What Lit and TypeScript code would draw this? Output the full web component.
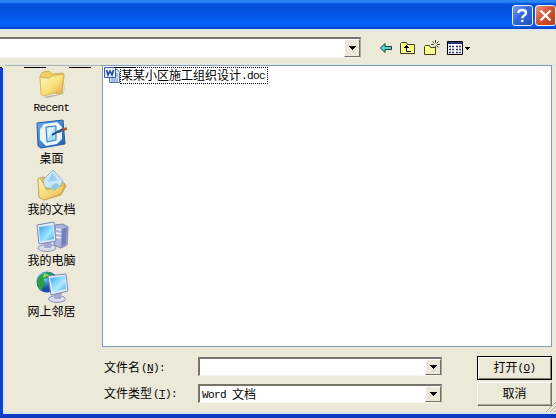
import { LitElement, html, css, svg } from "lit";
import { customElement } from "lit/decorators.js";

const folder = svg`<svg width="38" height="32" viewBox="0 0 38 32">
  <defs><linearGradient id="f" x2="1" y2="1"><stop stop-color="#fffbc0"/><stop offset=".55" stop-color="#f8df7c"/><stop offset="1" stop-color="#dda83c"/></linearGradient></defs>
  <path d="M10 30l17-3 4-3 2-13-3 16-16 4z" fill="#a89c78" opacity=".7"/>
  <path d="M7 9l3-4 6-1 3 3 11-1 1 3-2 17-4 1L8 20z" fill="#efcf62" stroke="#c8a548" stroke-width=".8"/>
  <path d="M7 10l4 1 5 0 3-2 12-2-2 17-19 5-2-2z" fill="url(#f)" stroke="#d2ab4c" stroke-width=".8"/></svg>`;

const desktop = svg`<svg width="38" height="32" viewBox="0 0 38 32">
  <defs><linearGradient id="d" x2="1" y2="1"><stop stop-color="#6eafeb"/><stop offset="1" stop-color="#1e5cae"/></linearGradient></defs>
  <path d="M4 5l26-3 2 24-24 4-3-2z" fill="url(#d)" stroke="#245da4"/>
  <path d="M11 6l13-2 5 5v12l-5 5-11 2-6-6V11z" fill="#e7f6fc"/>
  <path d="M13 9l10-1v14l-9 2z" fill="#a5d9f4" stroke="#3877b5"/>
  <path d="M14 10l8-1-7 12z" fill="#dcf4ff"/>
  <path d="M19 17l7-4" stroke="#163e83" stroke-width="1.500"/><path d="M25 14l6-3" stroke="#375687" stroke-width="2.600"/><path d="M30 11.500l4-1" stroke="#bd5037" stroke-width="2.600"/></svg>`;

const documents = svg`<svg width="38" height="32" viewBox="0 0 38 32">
  <defs><linearGradient id="m" x2="1" y2="1"><stop stop-color="#fff9b9"/><stop offset="1" stop-color="#e9b947"/></linearGradient></defs>
  <path d="M5 10l5-2 21 6 2 3-5 9-17 5-5-3z" fill="#eac85d" stroke="#bb9441" stroke-width=".8"/>
  <path d="M10 11L20 1l10 11-5 9-14-3z" fill="#c9e9f8" stroke="#73a9cf" stroke-width=".8"/>
  <path d="M19 4l6 7-10 2z" fill="#9fcdf2"/>
  <path d="M5 10l2-1 7 12 18-5-4 9-17 6-5-3z" fill="url(#m)" stroke="#cba04b" stroke-width=".8"/>
  <path d="M18 17l5-3 4 3-6 5z" fill="#8dcae3"/></svg>`;

const computer = svg`<svg width="38" height="32" viewBox="0 0 38 32">
  <defs><linearGradient id="c" x2="1" y2="1"><stop stop-color="#39a2ea"/><stop offset=".6" stop-color="#a0e8ff"/><stop offset="1" stop-color="#409bdf"/></linearGradient></defs>
  <path d="M22 5l8-1 5 3-1 18-6 3-7-3z" fill="#aeb4de" stroke="#7d83b1"/>
  <path d="M29 9l5-2-1 17-5 3z" fill="#777fbb"/><path d="M23 9l5 1M23 13l5 1M23 17l5 1" stroke="#eef0ff" stroke-width="1.500"/>
  <ellipse cx="14" cy="28" rx="9" ry="3.500" fill="#dadbed" stroke="#8b91b8"/>
  <path d="M11 20h8l-1 8h-7z" fill="#a2a8cf"/>
  <path d="M4 5l17-3 2 19-17 3z" fill="#e5eafa" stroke="#7789bd"/><path d="M6 7l14-2 1 14-14 3z" fill="url(#c)"/></svg>`;

const network = svg`<svg width="38" height="32" viewBox="0 0 38 32">
  <defs><radialGradient id="g" cx=".35" cy=".3"><stop stop-color="#b9efff"/><stop offset=".5" stop-color="#3a9dd9"/><stop offset="1" stop-color="#164eab"/></radialGradient>
  <linearGradient id="n" x2="1" y2="1"><stop stop-color="#38a4ed"/><stop offset=".6" stop-color="#adedff"/><stop offset="1" stop-color="#4ca5e2"/></linearGradient></defs>
  <circle cx="14" cy="11" r="10.500" fill="url(#g)"/>
  <path d="M6 6c5-6 11-5 14-3l-4 4-5 1 1 5-4 7C4 17 3 11 6 6z" fill="#2c9d45"/><path d="M11 2l5 2-6 3z" fill="#8ddb5e"/>
  <ellipse cx="24" cy="28" rx="8.500" ry="3.400" fill="#dadbed" stroke="#8b91b8"/><path d="M21 20h8l-1 8h-7z" fill="#a2a8cf"/>
  <path d="M15 5l18-2 2 17-17 4z" fill="#e5eafa" stroke="#7789bd"/><path d="M17 7l15-2 1 13-13 3z" fill="url(#n)"/></svg>`;

const places = [
  { icon: folder, name: "Recent", latin: true },
  { icon: desktop, name: "桌面" },
  { icon: documents, name: "我的文档" },
  { icon: computer, name: "我的电脑" },
  { icon: network, name: "网上邻居" },
];

@customElement("app-root")
export class AppRoot extends LitElement {
  static styles = css`
    :host { display: flex; flex-direction: column; box-sizing: border-box; width: 556px; height: 418px; overflow: hidden; background: #ece9d8; color: #000; font: 12px/16px "Noto Sans CJK SC", sans-serif; white-space: nowrap; }
    * { box-sizing: border-box; }
    svg { display: block; flex: none; }
    .l { display: inline-block; font: 11px/14px "Liberation Mono", monospace; letter-spacing: -0.6px; vertical-align: 1px; white-space: pre; }
    .title { height: 29px; flex: none; display: flex; justify-content: flex-end; gap: 2px; padding: 5px 0 0; background: linear-gradient(#2a86f5 0, #2a86f5 2px, #0550dd 4px, #0353e6 50%, #0463fb 75%, #0562f8 88%, #0140bd 100%); }
    .tb { width: 21px; height: 21px; border: 1px solid #e9f1ff; border-radius: 3px; background: linear-gradient(135deg, #7c9ff0, #3468dc 45%, #2150c4); }
    .close { background: linear-gradient(135deg, #e79a80, #d8532f 45%, #b93a17); }
    .tools { height: 36px; flex: none; display: flex; align-items: flex-start; border-top: 2px solid #dce8f0; border-bottom: 1px solid #e2e6e0; }
    .look { width: 361px; height: 21px; margin-top: 6px; }
    .combo { display: flex; justify-content: flex-end; background: #fff; border: 1px solid #f8f6ed; border-top: 2px solid #77756a; border-left: 2px solid #77756a; border-right-color: #aca899; }
    .look.combo { border-left: 0; }
    .combo > .value { flex: 1; padding-left: 2px; line-height: 15px; }
    .drop { width: 16px; align-self: stretch; display: grid; place-items: center; background: #ece9d8; border: 1px solid #fff; border-right-color: #716f64; border-bottom-color: #716f64; }
    .icons { display: flex; align-items: center; padding: 9px 0 0 18px; gap: 7px; }
    .body { height: 282px; flex: none; display: flex; position: relative; }
    .edge { width: 5px; margin-top: 3px; border-left: 3px solid #0b43cf; border-right: 2px solid #d9e5ef; flex: none; }
    .side { width: 97px; flex: none; display: flex; flex-direction: column; padding-top: 2px; border-top: 1px solid #a9b5b5; }
    .marks { position: absolute; top: 2px; left: 0; display: flex; }
    .marks i { width: 22px; height: 1px; background: #000; margin-left: 23px; }
    .marks i:first-child { width: 2px; margin-left: 0; }
    .marks i:nth-child(2) { margin-left: 22px; }
    .place { height: 51px; flex: none; display: flex; flex-direction: column; align-items: center; padding-right: 4px; }
    .pic { height: 32px; margin-top: -1px; }
    .name { height: 17px; line-height: 16px; }
    .name.l { line-height: 18px; }
    .list { width: 450px; background: #fff; border: 1px solid #7f9db9; padding: 1px 0 0 1px; }
    .file { display: flex; align-items: flex-start; height: 17px; }
    .filename { width: 148px; height: 17px; border: 1px dotted #000; line-height: 13px; }
    .foot { flex: 1; display: flex; border-left: 3px solid #0b43cf; border-bottom: 4px solid #0a3bc0; box-shadow: inset 2px -2px #d9e5ef; padding: 9px 0 0 101px; }
    .labels { width: 94px; padding-top: 3px; }
    .labels div { height: 26px; }
    .labels .l { padding-left: 1px; }
    .fields { width: 244px; padding-top: 1px; }
    .fields .combo { height: 19px; margin-bottom: 8px; }
    .buttons { margin-left: 35px; width: 75px; }
    .btn { height: 24px; padding-top: 2px; text-align: center; border: 1px solid #fff; border-right-color: #716f64; border-bottom-color: #716f64; box-shadow: inset -1px -1px #aca899; }
    .default { border-color: #000; box-shadow: inset 1px 1px #fff, inset -1px -1px #827f70; margin-bottom: 2px; }
    .grip { align-self: flex-end; margin: 0 0 2px -6px; }
  `;

  arrow() {
    return html`<span class="drop"><svg width="7" height="4" viewBox="0 0 7 4"><path d="M0 0h7v1H6v1H5v1H4v1H3V3H2V2H1V1H0z"/></svg></span>`;
  }

  render() {
    return html`
      <div class="title">
        <span class="tb"><svg width="19" height="19" viewBox="0 0 19 19" fill="none" stroke="#fff" stroke-width="2.400"><path d="M5.500 7V6Q6 4 9.300 4Q13 4 13 7Q13 8.600 11 9.700Q9.300 10.600 9.300 12.300M9.300 13.700v2.300"/></svg></span>
        <span class="tb close"><svg width="19" height="19" viewBox="0 0 19 19" stroke="#fff" stroke-width="2.400"><path d="M4.500 4.500l10 10M14.500 4.500l-10 10"/></svg></span>
      </div>
      <div class="tools">
        <div class="combo look">${this.arrow()}</div>
        <div class="icons">
          <svg width="14" height="12" viewBox="0 0 14 12"><path d="M1.500 6l4.500-4.500v3h6.500v3H6v3z" fill="#58d5cf" stroke="#153b43"/></svg>
          <svg width="16" height="14" viewBox="0 0 16 14"><path d="M.5 12.500v-10l1-1h5l1 2h7v9z" fill="#ffff91" stroke="#45421d"/><path d="M4 6.500h5M6.500 4v6.500H11M5 5.500h3" fill="none" stroke="#000"/></svg>
          <svg width="17" height="16" viewBox="0 0 17 16"><path d="M1.500 14.500v-8l1-1h4l1 2h5v7z" fill="#ffff91" stroke="#45421d"/><path d="M12.500 0v3M12.500 6v3M8 4.500h3M14 4.500h3M9.500 1.500l2 2M15.500 1.500l-2 2M15.500 7.500l-2-2" stroke="#4b4929"/></svg>
          <svg width="24" height="14" viewBox="0 0 24 14"><path d="M.5.5h15v13H.5z" fill="#fff" stroke="#000"/><path d="M1 1h14v2H1z" fill="#26357e"/><path d="M2 5.500h2M5 5.500h2M9 5.500h2M12 5.500h2M2 8.500h2M5 8.500h2M9 8.500h2M12 8.500h2M2 11.500h2M5 11.500h2M9 11.500h2M12 11.500h2" stroke="#26357e" stroke-width="1.500"/><path d="M18 6h5v1h-1v1h-1v1h-1V8h-1V7h-1z"/></svg>
        </div>
      </div>
      <div class="body">
        <div class="edge"></div>
        <div class="side">
          ${places.map((p) => html`<div class="place"><div class="pic">${p.icon}</div><div class="name ${p.latin ? "l" : ""}">${p.name}</div></div>`)}
        </div>
        <div class="list">
          <div class="file">
            <svg width="16" height="16" viewBox="0 0 16 16"><path d="M5.500 2.500h8l2 3v10h-10z" fill="#dbe8fb" stroke="#4d70ae"/><path d="M11 7h3M11 9h3M7 12h7M7 14h7" stroke="#6a8cc5"/><path d="M.5.5h11v10H.5z" fill="#edf4ff" stroke="#315da6"/><path d="M2.500 3l1.500 5 2-4 2 4 1.500-5" fill="none" stroke="#1e4a9b" stroke-width="1.600"/></svg>
            <div class="filename">某某小区施工组织设计<span class="l">.doc</span></div>
          </div>
        </div>
        <div class="marks"><i></i><i></i><i></i><i></i></div>
      </div>
      <div class="foot">
        <div class="labels">
          <div>文件名<span class="l">(<u>N</u>):</span></div>
          <div>文件类型<span class="l">(<u>T</u>):</span></div>
        </div>
        <div class="fields">
          <div class="combo">${this.arrow()}</div>
          <div class="combo"><span class="value"><span class="l">Word </span>文档</span>${this.arrow()}</div>
        </div>
        <div class="buttons">
          <div class="btn default">打开<span class="l">(<u>O</u>)</span></div>
          <div class="btn">取消</div>
        </div>
        <svg class="grip" width="10" height="10" viewBox="0 0 10 10" stroke="#aaa797"><path d="M0 10L10 0M4 10l6-6M8 10l2-2"/></svg>
      </div>
    `;
  }
}
